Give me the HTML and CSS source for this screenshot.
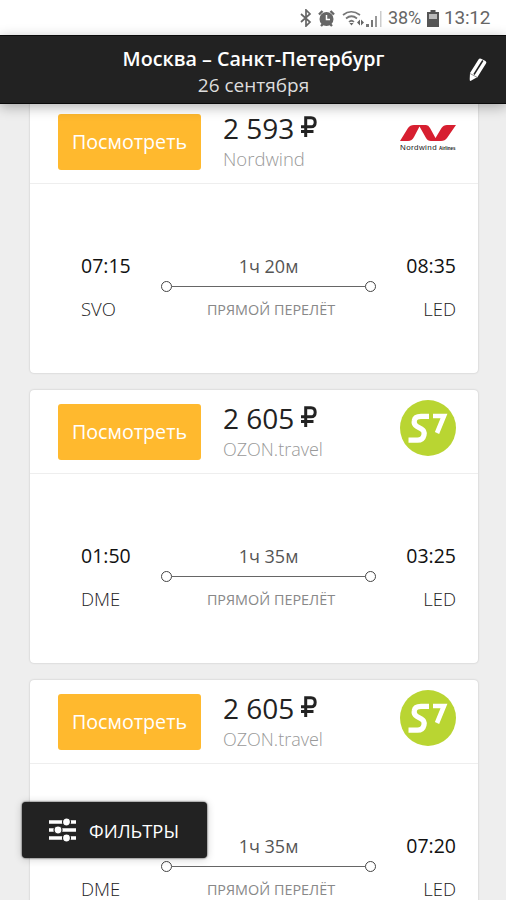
FILE: index.html
```html
<!DOCTYPE html>
<html lang="ru">
<head>
<meta charset="utf-8">
<meta name="viewport" content="width=device-width, initial-scale=1">
<title>Москва – Санкт-Петербург</title>
<link rel="stylesheet" href="styles.css">
</head>
<body>
<svg class="defs" width="0" height="0" aria-hidden="true">
  <symbol id="s7" viewBox="0 0 56 56">
    <circle cx="28" cy="28" r="28" fill="#b9d532"/>
    <path d="M29 16.300H21Q15 16.300 14.300 20.500Q13.500 24.500 17 26.500L21.500 29Q25 31 24 35Q22.800 40.200 17.500 40.200H8.500" fill="none" stroke="#fff" stroke-width="5.200"/>
    <path d="M33 16H44L37 33" fill="none" stroke="#fff" stroke-width="4.600"/>
  </symbol>
</svg>
<div class="screen">
  <div class="status">
    <svg class="bt" width="12" height="18" viewBox="0 0 12 18"><path d="M1 5L10 13L6 17V1L10 5L1 13" fill="none" stroke="#666" stroke-width="1.700"/></svg>
    <svg class="alarm" width="17" height="17" viewBox="0 0 17 17"><circle cx="8.500" cy="9" r="7" fill="#666"/><path d="M1 4.500L4.500 1M16 4.500L12.500 1M3 16L5 14M14 16L12 14" stroke="#666" stroke-width="2.400"/><path d="M8.500 5V9.500H12" fill="none" stroke="#fff" stroke-width="1.500"/></svg>
    <svg class="wifi" width="23" height="17" viewBox="0 0 23 17"><path d="M1 5Q9 -1.500 18 5M4 8.500Q9.500 4 15 8.500M7 12Q9.500 9.500 12 12" fill="none" stroke="#777" stroke-width="1.700"/><path d="M9.500 15.500L7.500 13H11.500ZM15 12.500L18 9.500V15.500ZM22 12.500L19 9.500V15.500Z" fill="#666"/></svg>
    <svg class="signal" width="17" height="17" viewBox="0 0 17 17"><path d="M1 14h3v3H1zM6 10h2v7H6z" fill="#777"/><path d="M10 6h2v11h-2z" fill="#999"/><path d="M15 1h1.500v16H15z" fill="#ccc"/></svg>
    <span class="percent">38%</span>
    <svg class="battery" width="12" height="17" viewBox="0 0 12 17"><path d="M3.500 0h5v2H12v15H0V2h3.500z" fill="#555"/><path d="M2 4h8v5H2z" fill="#bbb"/></svg>
    <span class="clock">13:12</span>
  </div>
  <header class="header">
    <div class="heading"><h1>Москва – Санкт-Петербург</h1><p>26 сентября</p></div>
    <svg class="pencil" width="20" height="26" viewBox="0 0 20 26"><path d="M2 16L10.500 2.500Q11.500 1 13 1.800L17.500 4Q19 5 18 6.500L9.500 20L2.500 24Q1.500 24 1.700 22Z" fill="#fff"/><path d="M6 17.500L14.800 3.500" stroke="#222" stroke-width="1.500"/><path d="M2 16.500L9.500 20.500" stroke="#777" stroke-width=".8"/></svg>
  </header>
  <main class="list">
    <article class="card">
      <div class="offer">
        <button class="buy">Посмотреть</button>
        <div class="info"><div class="price"><span>2 593</span><svg class="rub" width="16" height="21" viewBox="0 0 16 21"><path d="M4.700 21V1.700H10Q14.200 1.700 14.200 6.200T10 10.800H0M0 15.500H12.500" fill="none" stroke="#222" stroke-width="3"/></svg></div><div class="agency nord">Nordwind</div></div>
        <div class="logo nordwind">
          <svg width="56" height="16" viewBox="0 0 56 16"><path d="M0 16L8 3Q10 0 14 0H26Q28.500 0 30 3L35.500 13L41.500 3Q43.500 0 47 0H56L47 13Q45 16 41 16H31Q27.500 16 26 13L19.500 1.500L14 12Q12 16 8 16Z" fill="#d71f30"/></svg>
          <div class="brand"><span>Nordwind</span><small>Airlines</small></div>
        </div>
      </div>
      <div class="route">
        <div class="stop"><b>07:15</b><span>SVO</span></div>
        <div class="path"><span class="duration">1ч 20м</span><div class="track"><i></i><i></i></div><span class="direct">ПРЯМОЙ ПЕРЕЛЁТ</span></div>
        <div class="stop end"><b>08:35</b><span>LED</span></div>
      </div>
    </article>
    <article class="card">
      <div class="offer">
        <button class="buy">Посмотреть</button>
        <div class="info"><div class="price"><span>2 605</span><svg class="rub" width="16" height="21" viewBox="0 0 16 21"><path d="M4.700 21V1.700H10Q14.200 1.700 14.200 6.200T10 10.800H0M0 15.500H12.500" fill="none" stroke="#222" stroke-width="3"/></svg></div><div class="agency">OZON.travel</div></div>
        <svg class="logo" width="56" height="56"><use href="#s7"/></svg>
      </div>
      <div class="route">
        <div class="stop"><b>01:50</b><span>DME</span></div>
        <div class="path"><span class="duration">1ч 35м</span><div class="track"><i></i><i></i></div><span class="direct">ПРЯМОЙ ПЕРЕЛЁТ</span></div>
        <div class="stop end"><b>03:25</b><span>LED</span></div>
      </div>
    </article>
    <article class="card">
      <div class="offer">
        <button class="buy">Посмотреть</button>
        <div class="info"><div class="price"><span>2 605</span><svg class="rub" width="16" height="21" viewBox="0 0 16 21"><path d="M4.700 21V1.700H10Q14.200 1.700 14.200 6.200T10 10.800H0M0 15.500H12.500" fill="none" stroke="#222" stroke-width="3"/></svg></div><div class="agency">OZON.travel</div></div>
        <svg class="logo" width="56" height="56"><use href="#s7"/></svg>
      </div>
      <div class="route">
        <div class="stop"><b></b><span>DME</span></div>
        <div class="path"><span class="duration">1ч 35м</span><div class="track"><i></i><i></i></div><span class="direct">ПРЯМОЙ ПЕРЕЛЁТ</span></div>
        <div class="stop end"><b>07:20</b><span>LED</span></div>
      </div>
    </article>
  </main>
  <button class="filters">
    <svg width="27" height="24" viewBox="0 0 27 24"><path d="M0 4h27M0 12h27M0 20h27" stroke="#fff" stroke-width="3.600"/><g fill="#fff" stroke="#222" stroke-width="1.200"><circle cx="17.500" cy="4" r="4"/><circle cx="9" cy="12" r="4"/><circle cx="17.500" cy="20" r="4"/></g></svg>
    <span>ФИЛЬТРЫ</span>
  </button>
</div>
</body>
</html>
```
FILE: styles.css
```css
* { box-sizing: border-box; }
body { margin: 0; background: #eee; font-family: "Open Sans", "Noto Sans", sans-serif; color: #222; }
h1, p { margin: 0; }
button { border: 0; padding: 0; font: inherit; }
svg { display: block; flex: none; }
.defs { position: absolute; }
.screen { position: relative; width: 506px; height: 900px; overflow: hidden; display: flex; flex-direction: column; }
.status { height: 35px; flex: none; background: #fff; display: flex; align-items: center; justify-content: flex-end; padding: 1px 15px 0 0; font: 19px/24px Roboto, sans-serif; color: #666; }
.alarm { margin-left: 6px; }
.wifi { margin-left: 7px; }
.signal { margin-left: 0; }
.percent { width: 34px; margin-left: 6px; font-size: 18px; letter-spacing: -.1px; white-space: nowrap; }
.battery { margin-left: 5px; }
.clock { width: 47px; margin-left: 5px; letter-spacing: -.2px; }
.header { position: relative; z-index: 1; height: 69px; flex: none; background: #222; border: solid #0a0a0a; border-width: 1px 0; box-shadow: 0 3px 12px rgba(0,0,0,.3); display: flex; color: #fff; }
.heading { flex: 1; padding: 9px 0 0 49px; text-align: center; }
.heading h1 { font-size: 19.700px; line-height: 27px; font-weight: 600; }
.heading p { font-size: 19px; line-height: 26px; color: #ddd; }
.pencil { margin: 21px 18px 0 10px; }
.list { flex: 1; min-height: 0; margin-top: -4px; padding: 0 28px 0 30px; display: flex; flex-direction: column; gap: 17px; }
.card { flex: none; height: 273px; background: #fff; border-radius: 4px; box-shadow: 0 0 2px rgba(0,0,0,.22); }
.offer { height: 84px; border-bottom: 1px solid #eee; display: flex; padding: 14px 22px 0 28px; }
.buy { width: 143px; height: 56px; flex: none; border-radius: 3px; background: #ffb92e; color: #fff; font-size: 19.700px; padding-bottom: 1px; }
.info { flex: 1; padding-left: 22px; }
.price { display: flex; font-size: 28px; line-height: 32px; height: 32px; }
.price span { width: 71px; white-space: nowrap; margin-top: -2px; }
.rub { margin: 2px 0 0 7px; }
.agency { font-size: 18px; line-height: 26px; font-weight: 300; color: #999; }
.nord { font-size: 18.500px; }
.logo { margin-top: -4px; width: 56px; }
.nordwind { margin-top: 11px; }
.brand { display: flex; align-items: baseline; font: 8px/13px "Liberation Sans", sans-serif; letter-spacing: .4px; white-space: nowrap; color: #222; }
.brand span { width: 39px; }
.brand small { font-size: 4.500px; font-weight: bold; letter-spacing: 0; }
.route { display: flex; justify-content: space-between; padding: 66px 22px 0 51px; }
.stop { width: 80px; display: flex; flex-direction: column; }
.stop b { height: 32px; font-size: 19.500px; line-height: 32px; font-weight: 400; color: #111; }
.stop span { margin-top: 11px; font-size: 18.500px; line-height: 32px; font-weight: 300; color: #222; }
.end { text-align: right; }
.path { width: 215px; display: flex; flex-direction: column; align-items: center; text-align: center; }
.duration { font-size: 18px; line-height: 32px; color: #555; }
.track { width: 100%; height: 11px; display: flex; align-items: center; justify-content: space-between; background: linear-gradient(#666, #666) center / 193px 1px no-repeat; margin-top: -1px; }
.track i { width: 11px; height: 11px; border: 1.500px solid #444; border-radius: 50%; }
.direct { font-size: 14.400px; line-height: 24px; margin-top: 6px; padding-left: 5px; color: #888; white-space: nowrap; }
.filters { position: absolute; z-index: 2; left: 22px; top: 802px; width: 185px; height: 56px; border-radius: 4px; background: #222; color: #fff; display: flex; align-items: center; gap: 13px; padding-left: 27px; font-size: 18.400px; box-shadow: 0 0 2px #111, 0 1px 8px rgba(0,0,0,.2); }
```
